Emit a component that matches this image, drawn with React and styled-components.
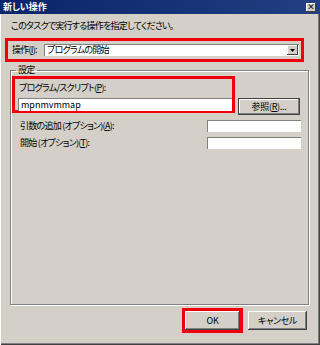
import React from "react";
import styled, { createGlobalStyle } from "styled-components";

const GlobalStyle = createGlobalStyle`
  body {
    margin: 0;
    background: #d4d0c8;
  }
  * {
    box-sizing: border-box;
  }
`;

const Window = styled.div`
  width: 320px;
  height: 345px;
  display: flex;
  flex-direction: column;
  background: #d4d0c8;
  font-family: "Noto Sans CJK JP", "Noto Sans", sans-serif;
  font-feature-settings: "palt";
  font-size: 9px;
  letter-spacing: -0.75px;
  line-height: 12px;
  color: #000;
  box-shadow: inset 1px 0 #ffffff, inset -1px -1px #404040,
    inset -2px -2px #808080;
`;

const TitleBar = styled.div`
  height: 14px;
  flex-shrink: 0;
  display: flex;
  align-items: center;
  justify-content: space-between;
  padding: 0 4px 0 3px;
  background: linear-gradient(90deg, #0a246a, #213f82);
  color: #fff;
  letter-spacing: 0;
  font-weight: bold;
`;

const CloseBtn = styled.div`
  width: 10px;
  height: 9px;
  display: flex;
  align-items: center;
  justify-content: center;
  background: #d4d0c8;
  box-shadow: inset -1px -1px #404040, inset 1px 1px #fff;
  color: #000;
  font-size: 8px;
  line-height: 8px;
`;

const Instruction = styled.div`
  margin: 6px 0 0 11px;
  height: 12px;
`;

const Highlight = styled.div`
  border: 3px solid #f0000a;
`;

const ActionBox = styled(Highlight)`
  margin: 6px 16px 0 5px;
  height: 24px;
  display: flex;
  align-items: center;
  padding: 0 2px 0 4px;
`;

const ActionLabel = styled.span`
  width: 32px;
  flex-shrink: 0;
`;

const Combo = styled.div`
  flex: 1;
  height: 12px;
  display: flex;
  align-items: center;
  background: #fff;
  box-shadow: inset 1px 1px #808080, inset -1px -1px #fff;
  padding: 0 1px 0 3px;
`;

const ComboText = styled.span`
  flex: 1;
`;

const ComboArrow = styled.div`
  width: 11px;
  height: 10px;
  display: flex;
  align-items: center;
  justify-content: center;
  background: #d4d0c8;
  box-shadow: inset -1px -1px #404040, inset 1px 1px #fff;
`;

const GroupBox = styled.fieldset`
  flex: 1;
  margin: 2px 11px 0 10px;
  padding: 0 7px 0 1px;
  border: 1px solid #808080;
  box-shadow: 1px 1px 0 #fff, inset 1px 1px 0 #fff;
  min-width: 0;
`;

const Legend = styled.legend`
  margin-left: 4px;
  padding: 0 2px;
  line-height: 12px;
`;

const ProgramRow = styled.div`
  display: flex;
  align-items: flex-start;
`;

const ProgramBox = styled(Highlight)`
  width: 223px;
  height: 37px;
  padding: 3px 0 0 3px;
  display: flex;
  flex-direction: column;
  gap: 4px;
`;

const FieldLabel = styled.span`
  padding-left: ${(p) => p.$indent || 0}px;
  white-space: pre;
`;

const TextBox = styled.div`
  height: ${(p) => p.$h || 12}px;
  width: ${(p) => (p.$w ? `${p.$w}px` : "100%")};
  flex-shrink: 0;
  background: #fff;
  box-shadow: inset 1px 1px #808080, inset -1px -1px #fff;
  padding: 0 3px;
  letter-spacing: 0;
  line-height: ${(p) => p.$h || 12}px;
`;

const Button = styled.div`
  height: ${(p) => p.$h || 19}px;
  width: ${(p) => p.$w}px;
  display: flex;
  align-items: center;
  justify-content: center;
  background: #d4d0c8;
  letter-spacing: -0.3px;
  box-shadow: inset -1px -1px #404040, inset 1px 1px #fff,
    inset -2px -2px #808080;
`;

const BrowseButton = styled(Button)`
  margin: 22px 0 0 3px;
  box-shadow: inset 0 0 0 1px #404040, inset -2px -2px #808080,
    inset 2px 2px #fff;
`;

const OptionRow = styled.div`
  display: flex;
  align-items: center;
  justify-content: space-between;
  margin-top: 5px;
  padding-left: 8px;
`;

const Footer = styled.div`
  height: 25px;
  flex-shrink: 0;
  margin: 3px 0 12px;
  padding-right: 13px;
  display: flex;
  align-items: center;
  justify-content: flex-end;
  gap: 5px;
`;

const Arrow = () => (
  <svg width="5" height="3" viewBox="0 0 5 3">
    <path d="M0 0h5L2.5 3z" fill="#000" />
  </svg>
);

export default function App() {
  return (
    <>
      <GlobalStyle />
      <Window>
        <TitleBar>
          <span>新しい操作</span>
          <CloseBtn>×</CloseBtn>
        </TitleBar>
        <Instruction>このタスクで実行する操作を指定してください。</Instruction>
        <ActionBox>
          <ActionLabel>
            操作(<u>I</u>):
          </ActionLabel>
          <Combo>
            <ComboText>プログラムの開始</ComboText>
            <ComboArrow>
              <Arrow />
            </ComboArrow>
          </Combo>
        </ActionBox>
        <GroupBox>
          <Legend>設定</Legend>
          <ProgramRow>
            <ProgramBox>
              <FieldLabel $indent={1}>
                プログラム/スクリプト(<u>P</u>):
              </FieldLabel>
              <TextBox $h={13}>mpnmvmmap</TextBox>
            </ProgramBox>
            <BrowseButton $w={62} $h={17}>
              参照(<u>R</u>)...
            </BrowseButton>
          </ProgramRow>
          <OptionRow>
            <FieldLabel>
              引数の追加 (オプション)(<u>A</u>):
            </FieldLabel>
            <TextBox $w={94} />
          </OptionRow>
          <OptionRow>
            <FieldLabel>
              開始 (オプション)(<u>T</u>):
            </FieldLabel>
            <TextBox $w={94} />
          </OptionRow>
        </GroupBox>
        <Footer>
          <Highlight>
            <Button $w={55}>OK</Button>
          </Highlight>
          <Button $w={59}>キャンセル</Button>
        </Footer>
      </Window>
    </>
  );
}
